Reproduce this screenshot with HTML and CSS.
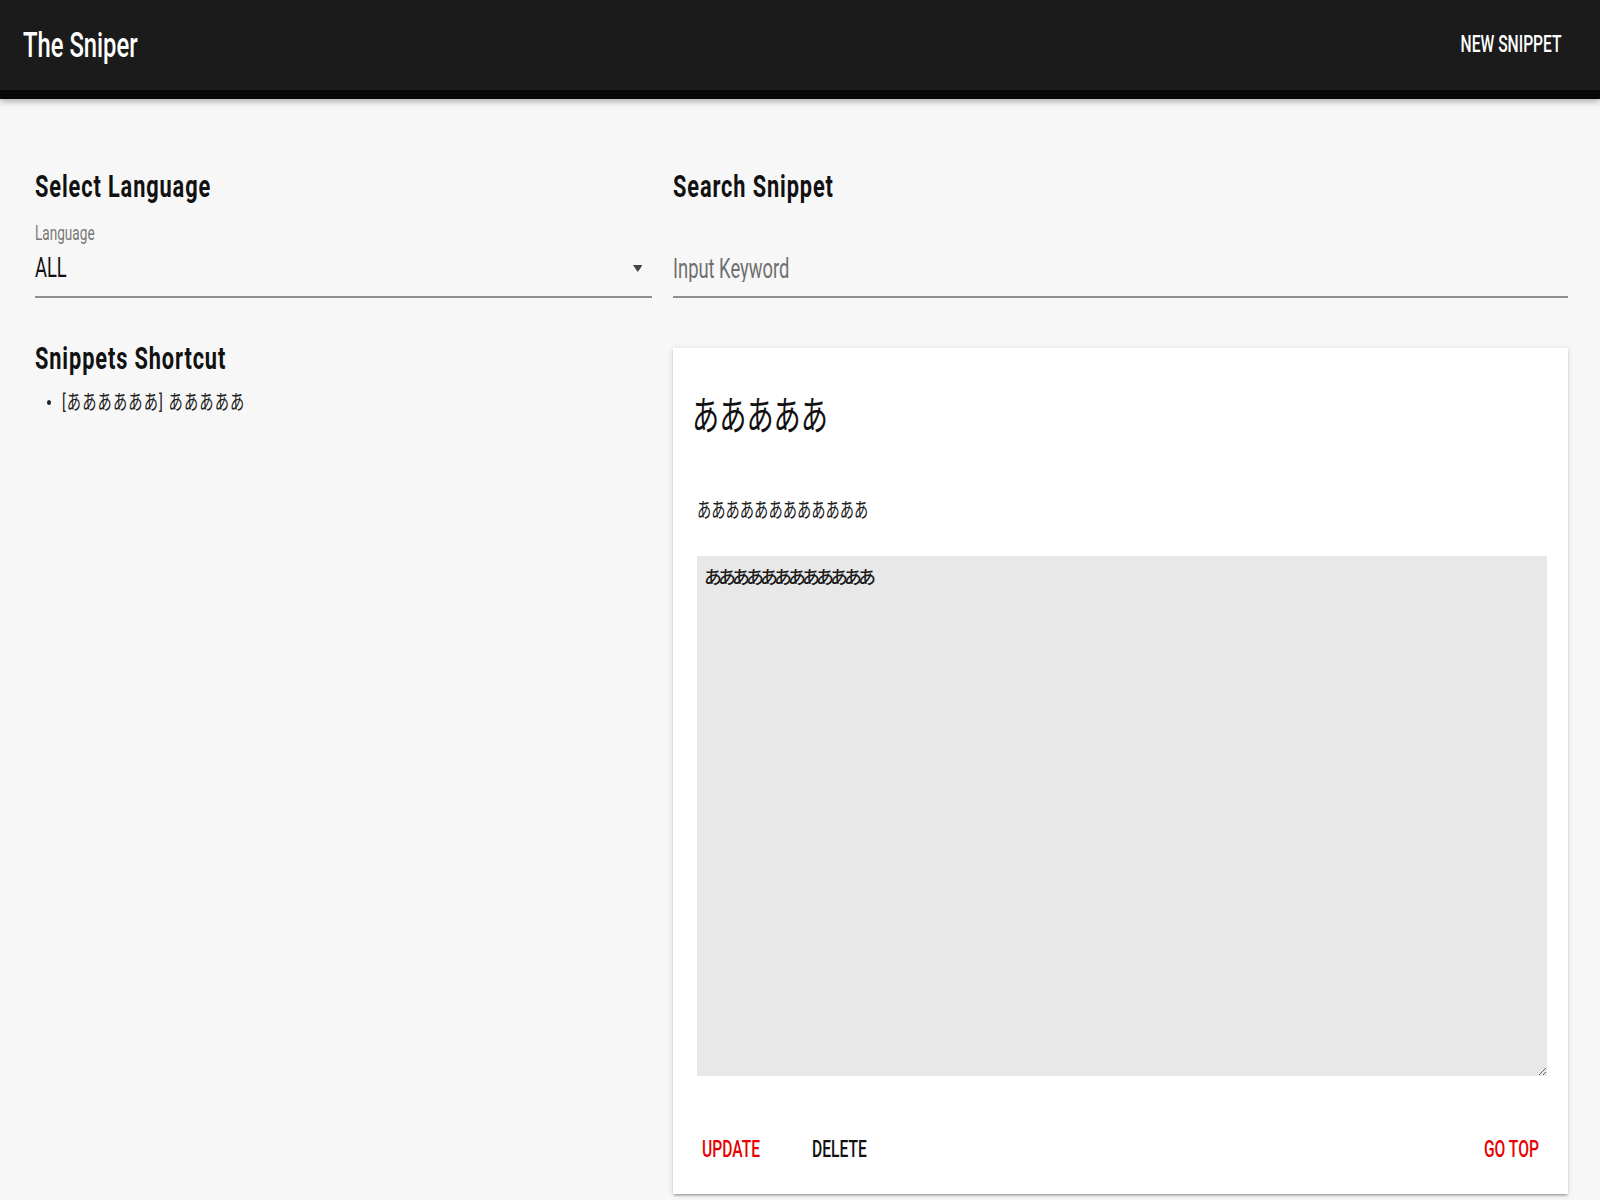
FILE: index.html
```html
<!DOCTYPE html>
<html lang="ja">
<head>
<meta charset="utf-8">
<title>The Sniper</title>
<link rel="stylesheet" href="styles.css">
</head>
<body>
<header class="appbar">
  <h1 class="brand"><span class="cx">The Sniper</span></h1>
  <button class="appbar-btn" type="button"><span class="cx cx-r">New Snippet</span></button>
</header>
<main class="content">
  <section class="col">
    <h2 class="section-title"><span class="cx">Select Language</span></h2>
    <div class="field">
      <label class="field-label"><span class="cx">Language</span></label>
      <div class="select">
        <span class="select-value cx">ALL</span>
        <svg class="select-arrow" viewBox="0 0 14 7" preserveAspectRatio="none" aria-hidden="true"><path d="M0 0h14L7 7z"/></svg>
      </div>
    </div>
    <h2 class="section-title shortcut-title"><span class="cx">Snippets Shortcut</span></h2>
    <ul class="shortcut-list">
      <li><span class="cx">[ああああああ] あああああ</span></li>
    </ul>
  </section>
  <section class="col">
    <h2 class="section-title"><span class="cx">Search Snippet</span></h2>
    <div class="field field-nolabel">
      <input class="search-input" type="text" placeholder="Input Keyword">
    </div>
    <article class="card">
      <h3 class="card-title"><span class="cx">あああああ</span></h3>
      <p class="card-desc"><span class="cx">ああああああああああああ</span></p>
      <textarea class="card-code">ああああああああああああ</textarea>
      <div class="card-actions">
        <button class="btn btn-red" type="button"><span class="cx">Update</span></button>
        <button class="btn btn-dark" type="button"><span class="cx">Delete</span></button>
        <button class="btn btn-red btn-end" type="button"><span class="cx cx-r">Go Top</span></button>
      </div>
    </article>
  </section>
</main>
</body>
</html>
```
FILE: styles.css
```css
html, body {
  margin: 0;
  padding: 0;
  background: #f7f7f7;
}

body {
  font-family: Roboto, "Noto Sans CJK JP", sans-serif;
  color: #111;
  min-height: 1200px;
  overflow: hidden;
}

/* condensed type, as in the reference */
.cx {
  display: inline-block;
  white-space: nowrap;
  transform: scaleX(0.68);
  transform-origin: 0 50%;
}

.cx-r {
  transform-origin: 100% 50%;
}

.appbar {
  display: flex;
  align-items: center;
  justify-content: space-between;
  height: 90px;
  padding: 0 38px 0 22.5px;
  background: #1b1b1b;
  border-bottom: 9px solid #070707;
  box-shadow: 0 3px 6px rgba(0, 0, 0, 0.28);
  position: relative;
  z-index: 1;
}

.brand {
  margin: 0;
  font: 500 35px/35px Roboto, sans-serif;
  color: #fff;
}

.appbar-btn {
  background: none;
  border: none;
  padding: 0;
  color: #fff;
  font: 500 23px/24px Roboto, sans-serif;
  text-transform: uppercase;
}

.content {
  display: grid;
  grid-template-columns: 617px 1fr;
  column-gap: 21px;
  align-items: start;
  padding: 71px 32px 0 35px;
}

.col {
  display: flex;
  flex-direction: column;
}

.section-title {
  margin: 0;
  font: 700 32px/32px Roboto, sans-serif;
  letter-spacing: 1.3px;
  color: #111;
}

.field {
  margin-top: 21px;
  border-bottom: 2px solid #8e8e8e;
  padding-bottom: 14px;
}

.field-nolabel {
  padding-top: 32px;
}

.field-label {
  display: block;
  font: 400 20px/20px Roboto, sans-serif;
  color: #777;
  margin-bottom: 12px;
}

.select {
  display: flex;
  align-items: center;
  justify-content: space-between;
  height: 27px;
  padding-right: 10px;
}

.select-value {
  font: 400 27px/27px Roboto, sans-serif;
  color: #111;
}

.select-arrow {
  width: 9.5px;
  height: 7px;
  fill: #444;
}

.search-input {
  display: block;
  box-sizing: border-box;
  width: 100%;
  height: 27px;
  padding: 0;
  border: none;
  outline: none;
  background: transparent;
  font: 400 27px/27px Roboto, sans-serif;
  color: #111;
  transform: scaleX(0.68);
  transform-origin: 0 50%;
}

.search-input::placeholder {
  color: #6f6f6f;
}

.shortcut-title {
  margin-top: 44px;
}

.shortcut-list {
  list-style: none;
  margin: 13px 0 0;
  padding-left: 12px;
  font: 400 21px/30px Roboto, "Noto Sans CJK JP", sans-serif;
  letter-spacing: 1.6px;
  color: #222;
}

.shortcut-list li {
  display: flex;
  align-items: center;
}

.shortcut-list li::before {
  content: "";
  flex: none;
  width: 4px;
  height: 5px;
  margin-right: 11px;
  border-radius: 50%;
  background: #222;
}

.card {
  margin-top: 50px;
  background: #fff;
  padding: 41px 21px 32px 24px;
  box-shadow: 0 2px 2px rgba(0, 0, 0, 0.14), 0 3px 2px -2px rgba(0, 0, 0, 0.2), 0 1px 6px rgba(0, 0, 0, 0.12);
}

.card-title {
  margin: 0 0 0 -5.5px;
  font: 400 40px/48px "Noto Sans CJK JP", sans-serif;
  color: #111;
}

.card-desc {
  margin: 56px 0 0;
  font: 400 21px/30px "Noto Sans CJK JP", sans-serif;
  color: #222;
}

.card-code {
  display: block;
  box-sizing: border-box;
  width: 100%;
  height: 520px;
  margin-top: 33px;
  padding: 5px 7px;
  border: none;
  outline: none;
  background: #e8e8e8;
  font: 500 18px/30px "Noto Sans CJK JP", sans-serif;
  letter-spacing: -4px;
  color: #1a1a1a;
}

.card-actions {
  display: flex;
  align-items: center;
  margin-top: 62px;
  padding: 0 8px 0 5px;
}

.btn {
  background: none;
  border: none;
  padding: 0;
  font: 500 23px/24px Roboto, sans-serif;
  text-transform: uppercase;
}

.btn-red {
  color: #e80000;
}

.btn-dark {
  color: #111;
  margin-left: 25px;
}

.btn-end {
  margin-left: auto;
}
```
